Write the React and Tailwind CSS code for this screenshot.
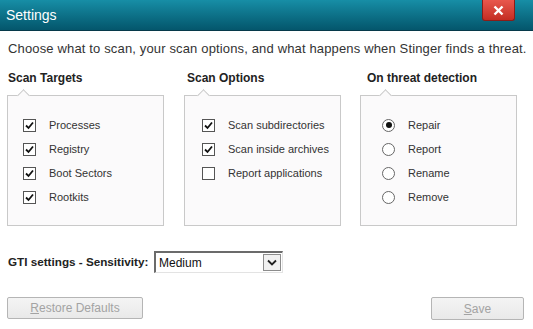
import React from "react";

const font = { fontFamily: '"Liberation Sans", Arial, sans-serif' };

function Check({ checked }) {
  return (
    <span className="flex h-[13px] w-[13px] items-center justify-center border border-[#555] bg-white">
      {checked && (
        <svg width="9" height="9" viewBox="0 0 9 9">
          <path d="M1 4.5 L3.5 7 L8 1.5" fill="none" stroke="#111" strokeWidth="1.8" />
        </svg>
      )}
    </span>
  );
}

function Radio({ checked }) {
  return (
    <span className="flex h-[13px] w-[13px] items-center justify-center rounded-full border border-[#666] bg-white">
      {checked && <span className="h-[6px] w-[6px] rounded-full bg-[#111]" />}
    </span>
  );
}

function Box({ children, notch, pl }) {
  return (
    <div className={`relative h-[131px] w-[157px] border border-[#c9c9c9] bg-[#fbfafb] pt-[17px] ${pl}`}>
      <span
        className={`absolute top-[-5px] h-[9px] w-[9px] rotate-45 border-l border-t border-[#c9c9c9] bg-[#fbfafb] ${notch}`}
      />
      {children}
    </div>
  );
}

function Row({ control, label, gap }) {
  return (
    <div className={`flex h-[24px] items-center ${gap} text-[11px] text-[#333]`}>
      {control}
      <span>{label}</span>
    </div>
  );
}

export default function App() {
  return (
    <div style={font} className="h-[329px] w-[533px] overflow-hidden bg-white">
      <div className="relative flex h-[31px] items-center border-b border-[#06394a] bg-gradient-to-b from-[#178ea6] to-[#04566c] pl-[6px]">
        <span className="text-[14px] text-white">Settings</span>
        <div className="absolute right-[18px] top-0 flex h-[21px] w-[33px] items-center justify-center rounded-b-[3px] border border-t-0 border-[#8a1d18] bg-gradient-to-b from-[#e8574d] to-[#c42c22]">
          <svg width="11" height="11" viewBox="0 0 11 11">
            <path d="M1.5 1.5 L9.5 9.5 M9.5 1.5 L1.5 9.5" stroke="white" strokeWidth="2.4" />
          </svg>
        </div>
      </div>

      <div className="pl-[8px] pt-[10px] text-[13px] leading-[15px] tracking-[0.15px] text-[#333] whitespace-nowrap">
        Choose what to scan, your scan options, and what happens when Stinger finds a threat.
      </div>

      <div className="mt-[15px] flex pl-[7px]">
        <div className="w-[177px]">
          <div className="pl-[1px] text-[12px] font-bold leading-[14px] text-[#222]">Scan Targets</div>
          <div className="mt-[10px]">
            <Box notch="left-[11px]" pl="pl-[15px]">
              <Row control={<Check checked />} label="Processes" gap="gap-[13px]" />
              <Row control={<Check checked />} label="Registry" gap="gap-[13px]" />
              <Row control={<Check checked />} label="Boot Sectors" gap="gap-[13px]" />
              <Row control={<Check checked />} label="Rootkits" gap="gap-[13px]" />
            </Box>
          </div>
        </div>
        <div className="w-[176px]">
          <div className="pl-[3px] text-[12px] font-bold leading-[14px] text-[#222]">Scan Options</div>
          <div className="mt-[10px]">
            <Box notch="left-[14px]" pl="pl-[17px]">
              <Row control={<Check checked />} label="Scan subdirectories" gap="gap-[13px]" />
              <Row control={<Check checked />} label="Scan inside archives" gap="gap-[13px]" />
              <Row control={<Check />} label="Report applications" gap="gap-[13px]" />
            </Box>
          </div>
        </div>
        <div>
          <div className="pl-[7px] text-[12px] font-bold leading-[14px] text-[#222]">On threat detection</div>
          <div className="mt-[10px]">
            <Box notch="left-[20px]" pl="pl-[21px]">
              <Row control={<Radio checked />} label="Repair" gap="gap-[13px]" />
              <Row control={<Radio />} label="Report" gap="gap-[13px]" />
              <Row control={<Radio />} label="Rename" gap="gap-[13px]" />
              <Row control={<Radio />} label="Remove" gap="gap-[13px]" />
            </Box>
          </div>
        </div>
      </div>

      <div className="mt-[25px] flex items-center pl-[8px]">
        <span className="w-[146px] text-[11.7px] font-bold text-[#222]">GTI settings - Sensitivity:</span>
        <div className="flex h-[22px] w-[129px] items-center border-l-2 border-t-2 border-b border-r border-l-[#6b6b6b] border-t-[#6b6b6b] border-b-[#e3e3e3] border-r-[#e3e3e3] bg-white">
          <span className="flex-1 pl-[3px] text-[12px] text-[#111]">Medium</span>
          <span className="mr-[1px] flex h-[17px] w-[18px] items-center justify-center border border-[#8c8c8c] bg-[#f1f1f1]">
            <svg width="10" height="7" viewBox="0 0 10 7">
              <path d="M1 1.5 L5 5.5 L9 1.5" fill="none" stroke="#222" strokeWidth="1.8" />
            </svg>
          </span>
        </div>
      </div>

      <div className="mt-[24px] flex justify-between pl-[7px] pr-[9px]">
        <div className="flex h-[22px] w-[136px] items-center justify-center rounded-[2px] border border-[#b5b5b5] bg-gradient-to-b from-[#f4f4f4] to-[#e9e9e9] text-[12px] text-[#a3a3a3]">
          <span><span className="underline">R</span>estore Defaults</span>
        </div>
        <div className="flex h-[23px] w-[93px] items-center justify-center rounded-[2px] border border-[#b5b5b5] bg-gradient-to-b from-[#f4f4f4] to-[#e9e9e9] text-[12px] text-[#a3a3a3]">
          <span><span className="underline">S</span>ave</span>
        </div>
      </div>
    </div>
  );
}
